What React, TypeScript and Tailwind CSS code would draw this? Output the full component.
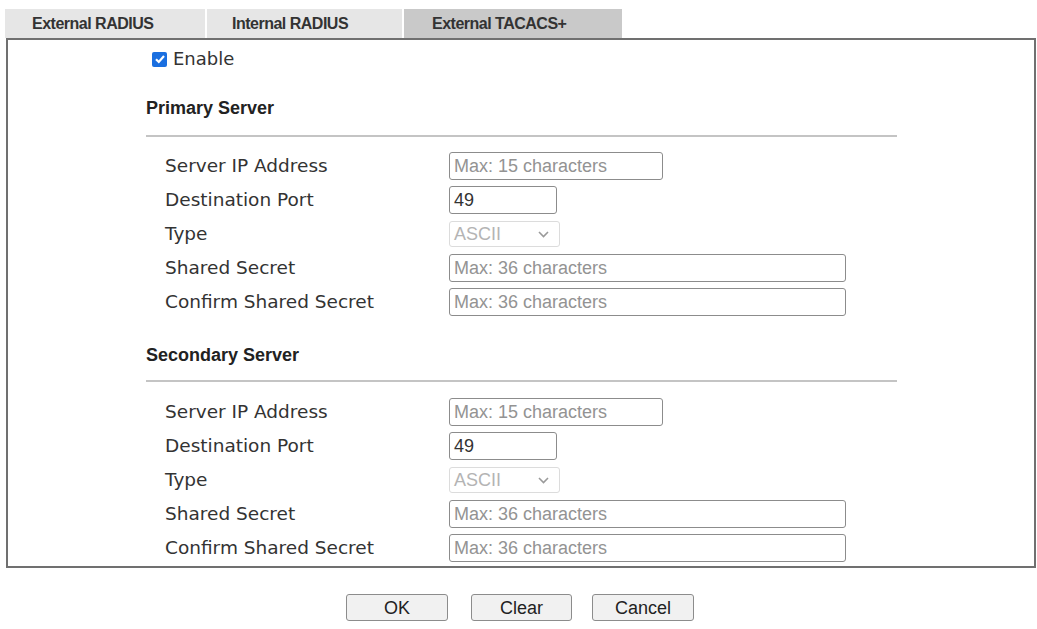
import React from "react";

const labelFont = { fontFamily: '"DejaVu Sans", sans-serif' };

function TextInput({ w, placeholder, value }: { w: string; placeholder?: string; value?: string }) {
  return (
    <div
      className={`${w} h-[28px] border border-[#8c8c8c] rounded-[3px] bg-white flex items-center px-[4px] text-[18px] leading-none`}
      style={{ fontFamily: '"Liberation Sans", Arial, sans-serif' }}
    >
      {value ? <span className="text-[#333]">{value}</span> : <span className="text-[#939393]">{placeholder}</span>}
    </div>
  );
}

function TypeSelect() {
  return (
    <div
      className="w-[111px] h-[26px] border border-[#dcdcdc] rounded-[3px] bg-white flex items-center justify-between pl-[4px] pr-[10px] text-[18px] leading-none text-[#b4b4b4]"
      style={{ fontFamily: '"Liberation Sans", Arial, sans-serif' }}
    >
      <span>ASCII</span>
      <svg width="11" height="7" viewBox="0 0 11 7">
        <path d="M1 1 L5.5 5.5 L10 1" fill="none" stroke="#9a9a9a" strokeWidth="1.6" />
      </svg>
    </div>
  );
}

function Row({ label, children }: { label: string; children: React.ReactNode }) {
  return (
    <div className="h-[34px] flex items-center">
      <div className="w-[303px] pl-[19px] text-[18.5px] text-[#333] leading-none" style={labelFont}>
        {label}
      </div>
      {children}
    </div>
  );
}

function Section({ title, mtHead, mtLine, mtRows }: { title: string; mtHead: string; mtLine: string; mtRows: string }) {
  return (
    <div className="pl-[138px]">
      <div
        className={`${mtHead} h-[26px] flex items-center text-[18px] font-bold text-[#222]`}
        style={{ fontFamily: '"Liberation Sans", Arial, sans-serif' }}
      >
        {title}
      </div>
      <div className={`${mtLine} w-[751px] h-[2px] bg-[#c4c4c4]`} />
      <div className={`${mtRows} flex flex-col`}>
        <Row label="Server IP Address">
          <TextInput w="w-[214px]" placeholder="Max: 15 characters" />
        </Row>
        <Row label="Destination Port">
          <TextInput w="w-[108px]" value="49" />
        </Row>
        <Row label="Type">
          <TypeSelect />
        </Row>
        <Row label="Shared Secret">
          <TextInput w="w-[397px]" placeholder="Max: 36 characters" />
        </Row>
        <Row label="Confirm Shared Secret">
          <TextInput w="w-[397px]" placeholder="Max: 36 characters" />
        </Row>
      </div>
    </div>
  );
}

function Btn({ w, children }: { w: string; children: React.ReactNode }) {
  return (
    <div
      className={`${w} h-[27px] border border-[#8c8c8c] rounded-[3px] bg-[#f1f1f1] flex items-center justify-center text-[18px] text-[#222] leading-none`}
      style={{ fontFamily: '"Liberation Sans", Arial, sans-serif' }}
    >
      {children}
    </div>
  );
}

export default function App() {
  const tabFont = { fontFamily: '"Liberation Sans", Arial, sans-serif' };
  return (
    <div className="w-[1037px] h-[629px] bg-white overflow-hidden">
      <div className="flex pt-[9px] pl-[5px] gap-[2px] h-[38px]">
        <div className="w-[200px] h-[29px] bg-[#e6e6e6] pl-[27px] flex items-center text-[16px] font-bold text-[#333] tracking-[-0.5px]" style={tabFont}>
          External RADIUS
        </div>
        <div className="w-[195px] h-[29px] bg-[#e6e6e6] pl-[25px] flex items-center text-[16px] font-bold text-[#333] tracking-[-0.5px]" style={tabFont}>
          Internal RADIUS
        </div>
        <div className="w-[218px] h-[29px] bg-[#c9c9c9] pl-[28px] flex items-center text-[16px] font-bold text-[#333] tracking-[-0.5px]" style={tabFont}>
          External TACACS+
        </div>
      </div>
      <div className="ml-[6px] w-[1030px] h-[530px] border-2 border-[#707070]">
        <div className="pt-[8px] pl-[144px]">
          <div className="h-[22px] flex items-center">
            <div className="w-[15px] h-[15px] rounded-[2px] bg-[#1a6fe0] flex items-center justify-center">
              <svg width="12" height="12" viewBox="0 0 12 12">
                <path d="M2 6.2 L4.8 9 L10 3" fill="none" stroke="#fff" strokeWidth="2.2" />
              </svg>
            </div>
            <span className="ml-[6px] text-[18px] text-[#333] leading-none" style={labelFont}>
              Enable
            </span>
          </div>
        </div>
        <Section title="Primary Server" mtHead="mt-[25px]" mtLine="mt-[14px]" mtRows="mt-[12px]" />
        <Section title="Secondary Server" mtHead="mt-[23px]" mtLine="mt-[12px]" mtRows="mt-[13px]" />
      </div>
      <div className="mt-[26px] flex justify-center pl-[3px]">
        <Btn w="w-[102px]">OK</Btn>
        <div className="w-[23px]" />
        <Btn w="w-[101px]">Clear</Btn>
        <div className="w-[20px]" />
        <Btn w="w-[102px]">Cancel</Btn>
      </div>
    </div>
  );
}
